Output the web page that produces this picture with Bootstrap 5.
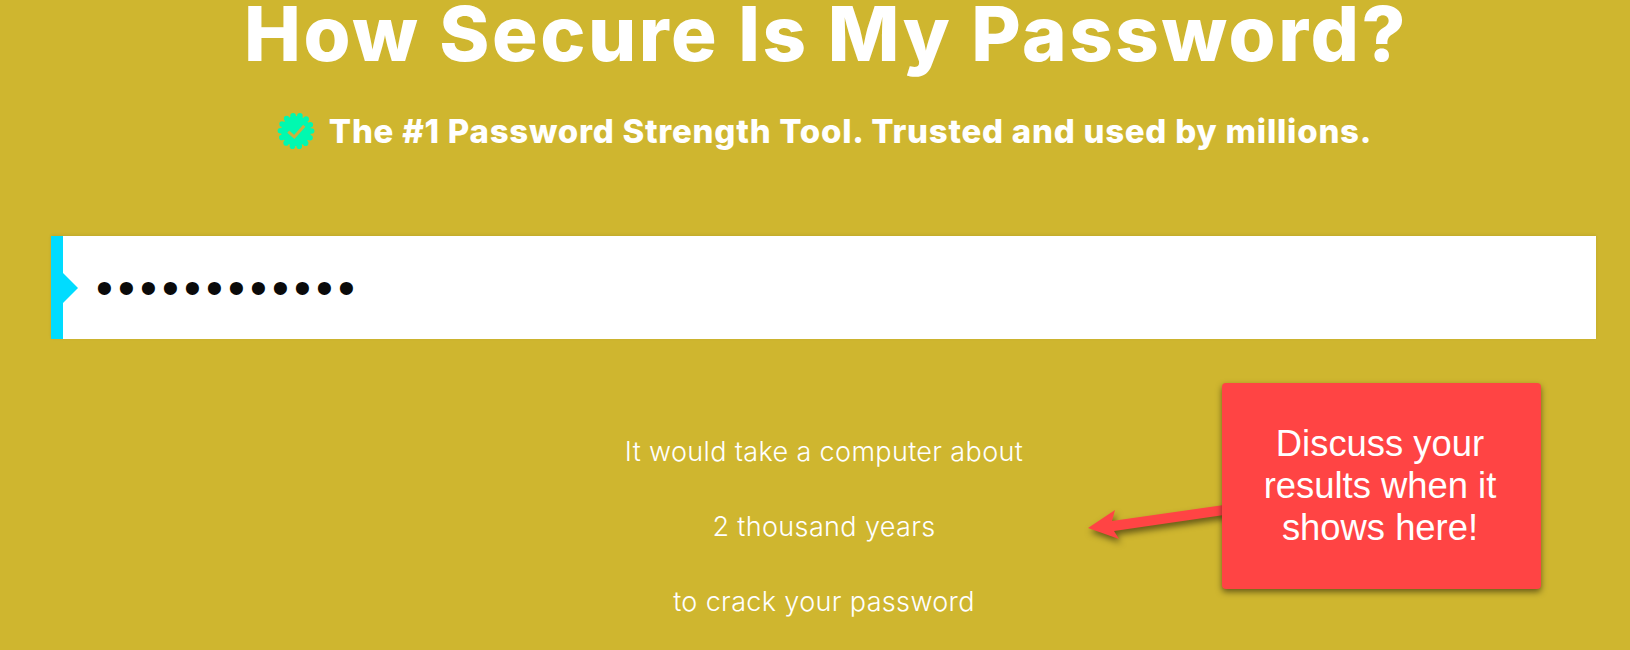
<!DOCTYPE html>
<html lang="en">
<head>
<meta charset="utf-8">
<title>How Secure Is My Password?</title>
<link href="https://cdn.jsdelivr.net/npm/bootstrap@5.3.0/dist/css/bootstrap.min.css" rel="stylesheet">
<style>
html,body{height:650px;overflow:hidden}
body{background:#cfb62f;color:#fff;font-family:Inter,"Noto Sans",sans-serif}
.hero-head{padding-left:19px}
.hero-title{font-family:Inter,sans-serif;font-weight:800;font-size:76px;line-height:62px;margin:0;letter-spacing:2.5px;padding-top:2px;padding-left:3px}
.hero-sub{font-family:Inter,sans-serif;font-weight:800;font-size:33px;line-height:40px;margin:47px 0 0;gap:14px;letter-spacing:.75px}
.pw-shell{margin:85px 34px 0 51px;height:103px;background:#fff;box-shadow:0 -1px 3px rgba(0,0,0,.08)}
.pw-edge{width:12px;background:#00dcff;position:relative;flex:none}
.pw-edge::after{content:"";position:absolute;left:12px;top:37px;border-left:15px solid #00dcff;border-top:15px solid transparent;border-bottom:15px solid transparent}
.pw-input{border:0;border-radius:0;background:transparent;box-shadow:none!important;padding:0 0 0 33px;height:103px;color:#0a0a0a;font-family:"Liberation Sans",sans-serif;font-size:48px;letter-spacing:5.2px}
.result-zone{position:relative}
.result-line{font-family:Inter,sans-serif;font-weight:300;font-size:27px;line-height:30px;margin:0 0 45px;letter-spacing:.35px}
.result-stack{padding:98px 0 0 18px}
.callout-note{position:absolute;left:1222px;top:44px;width:319px;height:206px;padding-right:3px;background:#f44;border-radius:4px;box-shadow:0 3px 6px rgba(0,0,0,.5);font-family:"Liberation Sans",sans-serif;font-size:36.4px;line-height:42px}
.callout-arrow{position:absolute;left:1080px;top:150px;filter:drop-shadow(2px 4px 3px rgba(0,0,0,.5))}
</style>
</head>
<body>
<main>
  <header class="hero-head">
    <h1 class="hero-title text-center">How Secure Is My Password?</h1>
    <h2 class="hero-sub d-flex justify-content-center align-items-center">
      <svg width="38" height="38" viewBox="-19 -19 38 38" aria-hidden="true"><circle r="15" fill="#00f9b0"/><circle r="15.6" fill="none" stroke="#00f9b0" stroke-width="5.6" stroke-linecap="round" stroke-dasharray="0 7.0015"/><path d="M-7.7 .7-1.7 6 8.3-5.3" fill="none" stroke="#c9b040" stroke-width="3"/></svg>
      <span>The #1 Password Strength Tool. Trusted and used by millions.</span>
    </h2>
  </header>
  <div class="pw-shell d-flex">
    <div class="pw-edge"></div>
    <input class="form-control pw-input" type="password" value="password1234" aria-label="Password">
  </div>
  <section class="result-zone">
    <div class="result-stack text-center">
      <p class="result-line">It would take a computer about</p>
      <p class="result-line">2 thousand years</p>
      <p class="result-line">to crack your password</p>
    </div>
    <svg class="callout-arrow" width="150" height="60" viewBox="1080 489 150 60" aria-hidden="true"><path d="M1088 528 1115 510 1112 521 1224 505V515L1114 531 1119 539Z" fill="#f44"/></svg>
    <div class="callout-note d-flex align-items-center justify-content-center text-center">Discuss your<br>results when it<br>shows here!</div>
  </section>
</main>
<script src="https://cdn.jsdelivr.net/npm/bootstrap@5.3.0/dist/js/bootstrap.bundle.min.js"></script>
</body>
</html>
